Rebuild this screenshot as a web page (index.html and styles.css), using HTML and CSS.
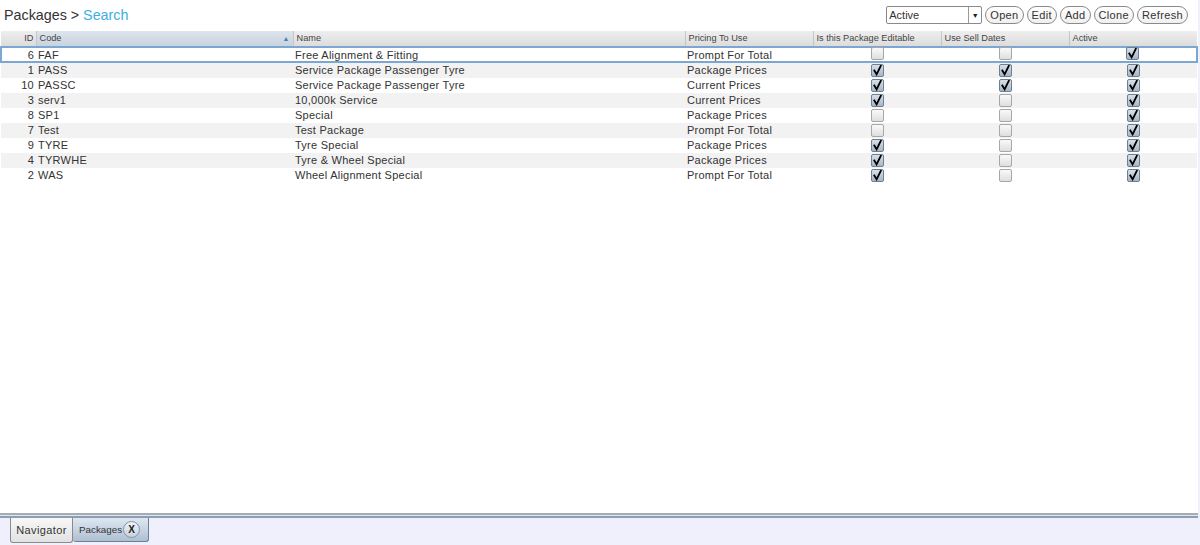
FILE: index.html
```html
<!DOCTYPE html>
<html>
<head>
<meta charset="utf-8">
<link rel="stylesheet" href="styles.css">
</head>
<body>
<div class="page">
  <div class="main">
    <div class="topbar">
      <div class="title">Packages &gt; <span class="crumb">Search</span></div>
      <div class="tools">
        <div class="select"><span class="sel-text">Active</span><span class="sel-arrow">&#9660;</span></div>
        <button class="btn">Open</button>
        <button class="btn">Edit</button>
        <button class="btn">Add</button>
        <button class="btn">Clone</button>
        <button class="btn">Refresh</button>
      </div>
    </div>
    <table class="grid">
      <colgroup>
        <col class="c-id"><col class="c-code"><col class="c-name"><col class="c-w"><col class="c-w"><col class="c-w"><col class="c-w">
      </colgroup>
      <thead>
        <tr>
          <th class="num">ID</th>
          <th class="sorted">Code<span class="sort">&#9650;</span></th>
          <th>Name</th>
          <th>Pricing To Use</th>
          <th>Is this Package Editable</th>
          <th>Use Sell Dates</th>
          <th>Active</th>
        </tr>
      </thead>
      <tbody>
        <tr class="selected"><td class="num">6</td><td>FAF</td><td>Free Alignment &amp; Fitting</td><td>Prompt For Total</td><td class="cb"><span class="box"></span></td><td class="cb"><span class="box"></span></td><td class="cb"><span class="box on"></span></td></tr>
        <tr class="alt"><td class="num">1</td><td>PASS</td><td>Service Package Passenger Tyre</td><td>Package Prices</td><td class="cb"><span class="box on"></span></td><td class="cb"><span class="box on"></span></td><td class="cb"><span class="box on"></span></td></tr>
        <tr><td class="num">10</td><td>PASSC</td><td>Service Package Passenger Tyre</td><td>Current Prices</td><td class="cb"><span class="box on"></span></td><td class="cb"><span class="box on"></span></td><td class="cb"><span class="box on"></span></td></tr>
        <tr class="alt"><td class="num">3</td><td>serv1</td><td>10,000k Service</td><td>Current Prices</td><td class="cb"><span class="box on"></span></td><td class="cb"><span class="box"></span></td><td class="cb"><span class="box on"></span></td></tr>
        <tr><td class="num">8</td><td>SP1</td><td>Special</td><td>Package Prices</td><td class="cb"><span class="box"></span></td><td class="cb"><span class="box"></span></td><td class="cb"><span class="box on"></span></td></tr>
        <tr class="alt"><td class="num">7</td><td>Test</td><td>Test Package</td><td>Prompt For Total</td><td class="cb"><span class="box"></span></td><td class="cb"><span class="box"></span></td><td class="cb"><span class="box on"></span></td></tr>
        <tr><td class="num">9</td><td>TYRE</td><td>Tyre Special</td><td>Package Prices</td><td class="cb"><span class="box on"></span></td><td class="cb"><span class="box"></span></td><td class="cb"><span class="box on"></span></td></tr>
        <tr class="alt"><td class="num">4</td><td>TYRWHE</td><td>Tyre &amp; Wheel Special</td><td>Package Prices</td><td class="cb"><span class="box on"></span></td><td class="cb"><span class="box"></span></td><td class="cb"><span class="box on"></span></td></tr>
        <tr><td class="num">2</td><td>WAS</td><td>Wheel Alignment Special</td><td>Prompt For Total</td><td class="cb"><span class="box on"></span></td><td class="cb"><span class="box"></span></td><td class="cb"><span class="box on"></span></td></tr>
      </tbody>
    </table>
  </div>
  <div class="divider"></div>
  <div class="tabs">
    <div class="tab nav">Navigator</div>
    <div class="tab active">Packages<span class="close">X</span></div>
  </div>
</div>
</body>
</html>
```

FILE: styles.css
```css
html, body {
  margin: 0;
  padding: 0;
}
body {
  font-family: "Liberation Sans", Arial, sans-serif;
  color: #333;
  background: #f0f0fc;
}
.page {
  width: 1200px;
  height: 545px;
  display: flex;
  flex-direction: column;
  background: #f0f0fc;
}
.main {
  width: 1198px;
  height: 513px;
  background: #fff;
  overflow: hidden;
}
.topbar {
  height: 31px;
  display: flex;
  align-items: flex-start;
  justify-content: space-between;
}
.title {
  font-size: 14.3px;
  padding: 7px 0 0 4px;
  color: #333;
}
.crumb {
  color: #3daee2;
}
.tools {
  display: flex;
  align-items: center;
  gap: 3px;
  padding: 6px 10px 0 0;
}
.select {
  width: 94px;
  height: 16px;
  border: 1px solid #8a8a8a;
  border-radius: 2px;
  display: flex;
  align-items: center;
  justify-content: space-between;
  font-size: 11px;
  background: #fff;
  margin-right: 0;
}
.sel-text {
  padding-left: 2px;
}
.sel-arrow {
  width: 12px;
  height: 16px;
  border-left: 1px solid #9a9a9a;
  font-size: 7px;
  display: flex;
  align-items: center;
  justify-content: center;
  color: #222;
}
.btn {
  font-family: "Liberation Sans", Arial, sans-serif;
  font-size: 11px;
  letter-spacing: 0.35px;
  color: #333;
  height: 18px;
  padding: 0 4px;
  border: 1px solid #8a8a8a;
  border-radius: 9px;
  background: linear-gradient(#ffffff, #f0f0f0);
  line-height: 16px;
}
.grid {
  border-collapse: collapse;
  table-layout: fixed;
  width: 1196px;
  font-size: 11px;
}
.c-id { width: 35px; }
.c-code { width: 257px; }
.c-name { width: 392px; }
.c-w { width: 128px; }
thead th {
  height: 15px;
  padding: 0 0 0 3px;
  font-weight: normal;
  font-size: 9.2px;
  text-align: left;
  color: #444;
  background: linear-gradient(#eeeeee, #dcdcdc);
  border-right: 1px solid #c6c6c6;
  border-bottom: 1px solid #b8b8b8;
  line-height: 15px;
  white-space: nowrap;
}
thead th:last-child {
  border-right: none;
}
thead th.num {
  text-align: right;
  padding: 0 2px 0 0;
}
thead th.sorted {
  background: linear-gradient(#dde4ec, #c8d3df);
  position: relative;
}
.sort {
  position: absolute;
  right: 3px;
  top: 0;
  font-size: 7px;
  color: #4a7fb2;
}
tbody td {
  height: 15px;
  padding: 0 0 0 2px;
  line-height: 15px;
  letter-spacing: 0.25px;
  white-space: nowrap;
  color: #333;
}
tbody td.num {
  text-align: right;
  padding: 0 2px 0 0;
}
tbody tr.alt td {
  background: #f2f2f2;
}
tbody tr.selected td {
  border-top: 2px solid #7ba7d2;
  border-bottom: 2px solid #7ba7d2;
  height: 10px;
  line-height: 11px;
  padding-top: 1px;
}
tbody tr.selected td:first-child {
  border-left: 2px solid #7ba7d2;
}
tbody tr.selected td:last-child {
  border-right: 2px solid #7ba7d2;
}
tbody td.cb {
  text-align: center;
  padding: 0;
}
tbody tr.selected td.cb {
  padding-top: 0;
}
.box {
  display: inline-block;
  width: 11px;
  height: 11px;
  border: 1px solid #a7a7a7;
  border-radius: 2px;
  background: linear-gradient(#fafafa, #dedede);
  vertical-align: middle;
  position: relative;
  top: -1px;
}
.box.on {
  border-color: #6f7f90;
  background: url("data:image/svg+xml,%3Csvg xmlns='http://www.w3.org/2000/svg' width='11' height='11' viewBox='0 0 11 11'%3E%3Cpath d='M2.3 5.6 L4.6 9.3 L8.8 0.8' fill='none' stroke='%23000' stroke-width='1.8' stroke-linecap='square' stroke-linejoin='miter'/%3E%3C/svg%3E") no-repeat center, linear-gradient(#d9e1ea, #a6b5c6);
}
.divider {
  width: 1198px;
  height: 1px;
  border-top: 2px solid #a4acb6;
  border-bottom: 2px solid #8d9db3;
  background: #dfe6ee;
}
.tabs {
  display: flex;
  padding-left: 10px;
  height: 27px;
}
.tab {
  height: 24px;
  display: flex;
  align-items: center;
  border: 1px solid #8a8a8a;
  border-top: none;
  border-radius: 0 0 3px 3px;
  color: #333;
}
.tab.nav {
  width: 61px;
  justify-content: center;
  font-size: 11px;
  letter-spacing: 0.4px;
  background: linear-gradient(#f8f8f8, #e2e2e2);
}
.tab.active {
  width: 76px;
  padding-left: 6px;
  box-sizing: border-box;
  font-size: 9.8px;
  background: linear-gradient(#dfe8f1, #aebfd2);
  border-left: none;
  border-color: #6d7f95;
}
.close {
  display: inline-flex;
  align-items: center;
  justify-content: center;
  width: 15px;
  height: 15px;
  border: 1px solid #8894a4;
  border-radius: 50%;
  margin-left: 1px;
  font-weight: bold;
  font-size: 10px;
  background: linear-gradient(#eef2f6, #c6d2df);
  color: #222;
}
```
